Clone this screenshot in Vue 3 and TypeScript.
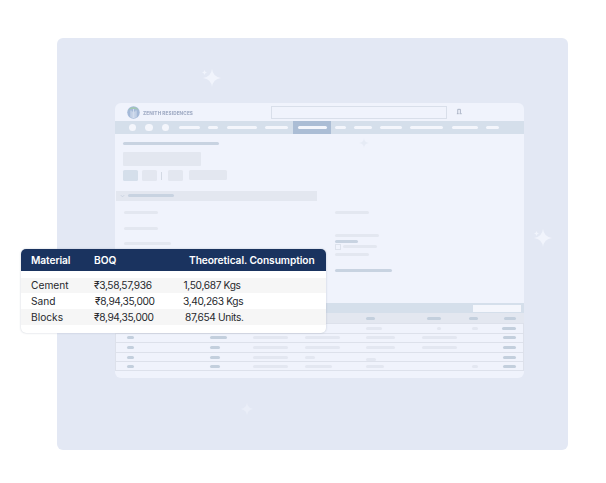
<script setup lang="ts">
type Bar = { w: number; tone?: string; off?: number; dy?: number }
type Cell = Bar | null

const navLeft = [21, 10, 30, 23]
const navRight = [10.5, 17.5, 21.5, 33, 26, 13]

const d = (w: number, off = 0): Bar => ({ w, tone: 'dark', off })
const f = (w: number, off = 0, dy = 0): Bar => ({ w, tone: 'faint', off, dy })

const headCells: Cell[] = [null, null, null, null, d(9), d(14, 5), d(9, -3), d(12, 1)]
const rows: Cell[][] = [
  [null, null, null, null, f(16), f(4, 15), f(6), d(14, -1)],
  [d(7), d(17), f(35), f(35), f(29), f(35), null, d(13)],
  [d(7), d(10), f(35), f(35), f(29), f(35), null, d(13)],
  [d(7), d(10), f(35), f(10), f(10, 0, 2), null, null, d(13)],
  [d(7), d(10), f(35), f(27), f(18), null, f(6), d(13)],
]

const materials = [
  { name: 'Cement', boq: '₹3,58,57,936', use: '1,50,687 Kgs', boqCls: '', useCls: 'use-a' },
  { name: 'Sand', boq: '₹8,94,35,000', use: '3,40,263 Kgs', boqCls: 'nudge', useCls: '' },
  { name: 'Blocks', boq: '₹8,94,35,000', use: '87,654 Units.', boqCls: '', useCls: 'use-c' },
]

const barStyle = (c: Bar) => ({
  width: `${c.w}px`,
  marginLeft: `${c.off ?? 0}px`,
  transform: c.dy ? `translateY(${c.dy}px)` : undefined,
})
</script>

<template>
  <div class="page">
    <section class="panel">
      <svg class="spark s1" viewBox="0 0 30 30"><path d="M15 0 Q16.500 13 30 15 Q16.500 17 15 30 Q13.500 17 0 15 Q13.500 13 15 0Z" /></svg>
      <svg class="spark s1b" viewBox="0 0 30 30"><path d="M15 0 Q17 13 30 15 Q17 17 15 30 Q13 17 0 15 Q13 13 15 0Z" /></svg>
      <svg class="spark s2" viewBox="0 0 30 30"><path d="M15 0 Q16.500 13 30 15 Q16.500 17 15 30 Q13.500 17 0 15 Q13.500 13 15 0Z" /></svg>
      <svg class="spark s2b" viewBox="0 0 30 30"><path d="M15 0 Q17 13 30 15 Q17 17 15 30 Q13 17 0 15 Q13 13 15 0Z" /></svg>
      <svg class="spark s3" viewBox="0 0 30 30"><path d="M15 0 Q16.500 13 30 15 Q16.500 17 15 30 Q13.500 17 0 15 Q13.500 13 15 0Z" /></svg>

      <div class="window">
        <header class="top">
          <svg class="logo" viewBox="0 0 26 26">
            <circle cx="13" cy="13" r="12.500" fill="#a4b9d8" />
            <path d="M3 9 A11 11 0 0 1 23 9 L19 6 L13 5 L7 6Z" fill="#a3cda6" />
            <path d="M8 23 V9 M13 24 V6 M18 23 V9 M10.500 24 V11 M15.500 24 V11" stroke="#edf1fa" stroke-width="1.300" />
          </svg>
          <span class="brand">ZENITH RESIDENCES</span>
          <div class="search"></div>
          <svg class="bell" viewBox="0 0 8 8"><path d="M2 1.500 H5 V6 M2 1.500 V6.500 M1 6.500 H3 M4 6.500 H6.500" fill="none" stroke="#a3adbf" stroke-width="1" /></svg>
        </header>

        <nav class="nav">
          <i class="dot"></i><i class="dot"></i><i class="dot"></i>
          <div class="nav-bars">
            <i v-for="(w, n) in navLeft" :key="n" class="navbar" :style="{ width: `${w}px` }"></i>
          </div>
          <div class="active"><i class="navbar wide"></i></div>
          <div class="nav-bars second">
            <i v-for="(w, n) in navRight" :key="n" class="navbar" :style="{ width: `${w}px` }"></i>
          </div>
        </nav>

        <div class="content">
          <i class="crumb"></i>
          <div class="title"></div>
          <div class="actions">
            <i class="btn on"></i><i class="btn"></i><i class="sep"></i><i class="btn b3"></i><i class="btn wide"></i>
          </div>
          <div class="section">
            <svg class="chev" viewBox="0 0 6 4"><path d="M1 1 L3 3 L5 1" fill="none" stroke="#c5d0df" stroke-width="1" /></svg>
            <i class="section-bar"></i>
          </div>
          <div class="cols">
            <div class="col left">
              <i class="label w34"></i>
              <i class="label w34 gap16"></i>
              <i class="label w47 gap15"></i>
            </div>
            <div class="col right">
              <i class="label w34"></i>
              <i class="label w44 gap22"></i>
              <i class="label dark w23 gap5"></i>
              <div class="check"><i class="box"></i><i class="label w34"></i></div>
              <i class="label w34 gap3"></i>
              <i class="label dark w57 gap16"></i>
            </div>
          </div>
          <svg class="spark inner-a" viewBox="0 0 30 30"><path d="M15 0 Q16 13 30 15 Q16 17 15 30 Q14 17 0 15 Q14 13 15 0Z" /></svg>
        </div>

        <div class="toolbar"><div class="filter"></div></div>

        <div class="grid-row head">
          <span v-for="(c, n) in headCells" :key="n" class="cell">
            <i v-if="c" :class="['bar', c.tone]" :style="barStyle(c)"></i>
          </span>
        </div>
        <div class="tbl">
          <div v-for="(row, r) in rows" :key="r" class="grid-row line">
            <span v-for="(c, n) in row" :key="n" class="cell">
              <i v-if="c" :class="['bar', c.tone]" :style="barStyle(c)"></i>
            </span>
          </div>
        </div>
      </div>
    </section>

    <div class="card">
      <div class="card-head">
        <span>Material</span><span>BOQ</span><span>Theoretical. Consumption</span>
      </div>
      <div class="card-body">
        <div v-for="m in materials" :key="m.name" class="card-row">
          <span>{{ m.name }}</span>
          <span :class="['num', m.boqCls]">{{ m.boq }}</span>
          <span :class="['num', m.useCls]">{{ m.use }}</span>
        </div>
      </div>
    </div>
  </div>
</template>

<style>
html, body { margin: 0; background: #fff; }
</style>

<style scoped>
.page {
  position: relative;
  width: 606px;
  height: 483px;
  overflow: hidden;
  padding: 38px 38px 33px 57px;
  box-sizing: border-box;
  font-family: Inter, "Noto Sans", sans-serif;
}
i { display: block; }
.panel {
  position: relative;
  height: 412px;
  background: #e3e8f4;
  border-radius: 6px;
  padding: 65px 44px 0 58px;
  box-sizing: border-box;
}
.spark { position: absolute; fill: #f1f4fc; filter: blur(0.7px); }
.s1 { left: 146px; top: 31px; width: 18px; height: 18px; }
.s1b { left: 145px; top: 32px; width: 5px; height: 5px; }
.s2 { left: 477px; top: 191px; width: 18px; height: 18px; }
.s2b { left: 477px; top: 193px; width: 5px; height: 5px; }
.s3 { left: 184px; top: 365px; width: 12px; height: 12px; opacity: .55; }
.window {
  height: 275px;
  width: 409px;
  background: #f0f3fc;
  border-radius: 6px;
  filter: blur(0.5px);
  overflow: hidden;
}
.top {
  height: 18px;
  display: flex;
  align-items: center;
  padding-left: 12px;
}
.logo { width: 13px; height: 13px; margin-top: 1px; }
.brand {
  width: 128px;
  margin-left: 3px;
  font-size: 4.700px;
  font-weight: 800;
  letter-spacing: 0.1px;
  color: #a3aec6;
  white-space: nowrap;
  margin-top: 1px;
}
.search {
  width: 174px;
  height: 11px;
  border: 1px solid #d9dfea;
  box-sizing: content-box;
  margin-top: 1px;
}
.bell { width: 7px; height: 7px; margin-left: 9px; margin-bottom: 2px; }
.nav {
  height: 13px;
  background: #d5dfeb;
  display: flex;
  align-items: center;
  padding-left: 13.500px;
}
.dot {
  width: 7.500px;
  height: 7.500px;
  border-radius: 50%;
  background: #f4f6fc;
  margin-right: 9.200px;
}
.nav-bars { display: flex; align-items: center; gap: 8.500px; }
.nav-bars.second { margin-left: 4px; }
.navbar { height: 3px; border-radius: 2px; background: #f4f6fc; }
.active {
  width: 38px;
  height: 13px;
  margin-left: 5px;
  background: #abbdd5;
  display: flex;
  align-items: center;
  justify-content: center;
}
.navbar.wide { width: 29px; }
.content {
  position: relative;
  height: 169px;
  padding: 7.500px 0 0 8px;
  box-sizing: border-box;
}
.crumb { width: 96px; height: 3px; background: #c8d3e1; border-radius: 2px; }
.title { width: 78px; height: 14px; margin-top: 7.500px; background: #e3e7f0; border-radius: 1px; }
.actions { display: flex; align-items: flex-start; margin-top: 4px; }
.btn { width: 15px; height: 11px; margin-right: 4px; background: #e3e7f0; border-radius: 1.500px; }
.btn.on { background: #d5dfeb; }
.btn.b3 { margin-right: 6px; }
.btn.wide { width: 38px; height: 10px; }
.sep { width: 1px; height: 8px; margin: 2px 6px 0 0; background: #d3d9e4; }
.section {
  width: 201px;
  height: 10px;
  margin: 9.500px 0 0 -7px;
  background: #e3e7f0;
  display: flex;
  align-items: center;
  padding-left: 4px;
  box-sizing: border-box;
}
.chev { width: 5px; height: 4px; }
.section-bar { width: 45.500px; height: 3px; margin-left: 3px; background: #c8d3e1; border-radius: 2px; }
.cols { display: flex; margin-top: 10.500px; }
.col.left { width: 211px; margin-left: 1px; }
.label { height: 3px; border-radius: 2px; background: #e3e7f0; }
.label.dark { background: #c8d3e1; }
.w23 { width: 23px; }
.w34 { width: 34px; }
.w44 { width: 44px; }
.w47 { width: 47px; }
.w57 { width: 57px; }
.gap3 { margin-top: 3px; }
.gap5 { margin-top: 3.500px; }
.gap15 { margin-top: 12px; }
.gap16 { margin-top: 13px; }
.gap22 { margin-top: 19.500px; }
.check { display: flex; align-items: center; gap: 2px; margin-top: 1px; }
.box { width: 3.500px; height: 3.500px; border: 1px solid #dde2ec; }
.inner-a { left: 244px; top: 4px; width: 10px; height: 10px; fill: #e6ebf5; }
.toolbar {
  height: 10px;
  background: #d5dfeb;
  display: flex;
  justify-content: flex-end;
  align-items: center;
  padding-right: 3px;
}
.filter { width: 48px; height: 7px; background: #f4f6fc; }
.grid-row {
  display: grid;
  grid-template-columns: 83px 43px 52px 61px 56px 50px 31px 1fr;
  padding-left: 12px;
  align-items: center;
  box-sizing: border-box;
}
.grid-row.head { height: 10px; background: #e3e7f0; }
.tbl { border: 1px solid #dde1eb; border-bottom: 0; border-top: 0; width: 409px; box-sizing: border-box; }
.grid-row.line { height: 9.600px; border-top: 1px solid #dde1eb; padding-left: 11px; }
.grid-row.line:last-child { border-bottom: 1px solid #dde1eb; }
.cell { display: block; min-width: 0; }
.bar { height: 3px; border-radius: 2px; }
.bar.dark { background: #c3cfdd; }
.bar.faint { background: #e3e7f1; }
.card {
  position: absolute;
  left: 21px;
  top: 249px;
  width: 305px;
  height: 84px;
  background: #fff;
  border-radius: 5px;
  box-shadow: 0 0 2px rgba(120, 130, 150, .45);
  overflow: hidden;
  font-size: 10.200px;
  color: #26282d;
}
.card-head {
  height: 22px;
  background: #1a335f;
  color: #fff;
  font-weight: 600;
  display: grid;
  grid-template-columns: 63px 95px 1fr;
  align-items: center;
  padding-left: 10px;
  white-space: nowrap;
  letter-spacing: -0.08px;
}
.card-body { margin-top: 6.500px; }
.card-row {
  height: 15.700px;
  display: grid;
  grid-template-columns: 63px 89px 1fr;
  align-items: center;
  padding-left: 10px;
  white-space: nowrap;
}
.card-row:nth-child(odd) { background: #f6f6f6; }
.num { letter-spacing: -0.35px; }
.nudge { margin-left: 1px; }
.use-a { margin-left: 0.500px; }
.use-c { margin-left: 2px; }
</style>
